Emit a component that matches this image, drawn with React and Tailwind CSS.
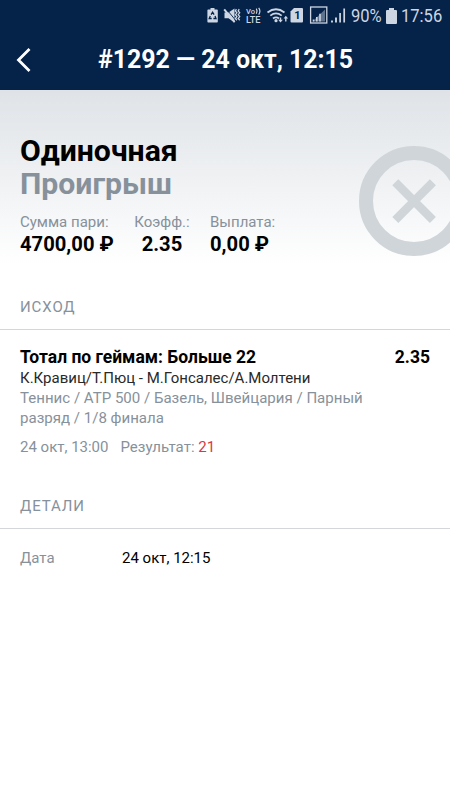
import React from "react";

const stats = [
  { label: "Сумма пари:", value: "4700,00 ₽", align: "w-[94px]" },
  { label: "Коэфф.:", value: "2.35", align: "w-14 text-center" },
  { label: "Выплата:", value: "0,00 ₽", align: "w-[66px]" },
];

// Battery saver, mute, VoLTE, wifi, SIM and signal icons
const StatusIcons = () => (
  <svg width="142" height="32" viewBox="0 0 142 32" fill="none" className="text-[#cdd6e2]">
    {/* battery with recycle sign */}
    <path d="M3.5 8h4v1.5H10a.8.8 0 0 1 .8.8v11.4a.8.8 0 0 1-.8.8H1.2a.8.8 0 0 1-.8-.8V10.3a.8.8 0 0 1 .8-.8h2.3z" fill="currentColor" />
    <path d="M4.1 14.6 5.6 12.2 7.1 14.6M8 16l1 2.5H6.4M4.7 18.5H2.2L3.3 16" stroke="#052248" strokeWidth="1.3" />

    {/* muted speaker with vibration */}
    <path d="M17.5 12.5h4L27.5 8.5v14l-6-4.2h-4z" fill="currentColor" />
    <path d="m19.2 8.8 10 12.2" stroke="#052248" strokeWidth=".9" />
    <path d="m17.2 9.4 10.4 12.8" stroke="currentColor" strokeWidth="2" />
    <path d="m29.4 9.2-1 1.7 1.5 1.9-1.5 1.9 1.5 1.9-1.5 1.9 1.5 1.7M32.2 9.2l-1 1.7 1.5 1.9-1.5 1.9 1.5 1.9-1.5 1.9 1.5 1.7" stroke="currentColor" strokeWidth="1.3" />

    <text x="39" y="14" fontSize="7.5" fontWeight="500" textLength="9" lengthAdjust="spacingAndGlyphs" fill="currentColor">Vo</text>
    <path d="M49.3 8.6q1.600 2.600 0 5.200M51.700 7.800q2.400 3.400 0 6.800" stroke="currentColor" strokeWidth="1.2" />
    <text x="39" y="23" fontSize="9" fontWeight="500" textLength="14.5" lengthAdjust="spacingAndGlyphs" fill="currentColor">LTE</text>

    {/* wifi with traffic arrows */}
    <path d="M60.5 12.5q8.5-6.5 17 0M63.3 15.6q5.7-4.4 11.4 0M66 18.5q3-2.3 6 0" stroke="currentColor" strokeWidth="1.8" />
    <circle cx="69" cy="20.7" r="1.6" fill="currentColor" />
    <path d="M72.8 17.5h1.4v2.2h1.7L73.5 22.5l-2.3-2.8h1.6zM79.500 21.500h-1.400V18.500h-1.500l2.200-2.800 2.300 2.800h-1.600z" fill="currentColor" />

    <path d="m87 8-3.5 3.5v10q0 1 1 1H95q1 0 1-1V9q0-1-1-1z" fill="currentColor" />
    <text x="87.3" y="19.3" fontSize="11" fontWeight="700" fill="#052248">1</text>

    {/* boxed signal */}
    <rect x="103.6" y="7" width="16.2" height="16" stroke="currentColor" strokeWidth="1.3" />
    <path d="M105.5 21.5 118 9.5v12z" fill="currentColor" opacity=".45" />
    <path d="M106.5 21.5v-2M109.800 21.5v-4.500M113 21.5v-7.700" stroke="currentColor" strokeWidth="1.6" />

    {/* second SIM signal */}
    <path d="M125 22.5v-2M129 22.5v-5" stroke="currentColor" strokeWidth="1.9" />
    <path d="M133.1 22.5v-9.5M137.2 22.5V8.5" stroke="currentColor" strokeWidth="1.7" />
  </svg>
);

const StatusBar = () => (
  <div className="flex h-8 items-center pl-[207px] text-[#cdd6e2]">
    <StatusIcons />
    <span className="ml-[2px] w-[32px] shrink-0 text-lg whitespace-nowrap">
      <span className="inline-block origin-left scale-x-[.92]">90%</span>
    </span>
    <svg width="11" height="16" viewBox="0 0 11 16" className="ml-[3px] shrink-0" fill="currentColor">
      <path d="M3 0h5v2h2q1 0 1 1v12q0 1-1 1H1q-1 0-1-1V3q0-1 1-1h2z" />
    </svg>
    <span className="ml-1 text-lg whitespace-nowrap">
      <span className="inline-block origin-left scale-x-[.92]">17:56</span>
    </span>
  </div>
);

const SectionTitle = ({ children }) => (
  <h2 className="h-[34px] border-b border-[#d3d7dc] px-5 text-[15px] leading-[22px] tracking-[.9px] text-[#87919b]">
    {children}
  </h2>
);

const App = () => {
  return (
    <div className="h-[800px] w-[450px] overflow-hidden bg-white font-['Roboto','Noto_Sans',sans-serif] text-black">
      <header className="h-[90px] bg-[#052248] text-white">
        <StatusBar />
        <div className="flex h-14 items-center">
          <svg width="20" height="28" viewBox="0 0 20 28" fill="none" className="ml-[14px]">
            <path d="M15.5 3 4.5 14 15.5 25" stroke="white" strokeWidth="2.8" />
          </svg>
          <h1 className="ml-16 text-[24.9px] font-bold whitespace-nowrap">#1292 — 24 окт, 12:15</h1>
        </div>
      </header>

      <section className="flex h-[206px] justify-between bg-linear-to-b from-[#dfe3e7] from-0% to-white to-85%">
        <div className="shrink-0 pt-11 pl-5">
          <p className="text-[30.2px] leading-[33px] font-bold">Одиночная</p>
          <p className="text-[30.2px] leading-[33px] font-bold text-[#87919b]">Проигрыш</p>
          <div className="mt-[11px] flex gap-5">
            {stats.map((s) => (
              <div key={s.label} className={`whitespace-nowrap ${s.align}`}>
                <p className="text-[15px] leading-[22px] text-[#87919b]">{s.label}</p>
                <p className="text-[20.2px] leading-[22px] font-bold">{s.value}</p>
              </div>
            ))}
          </div>
        </div>
        <svg width="91" height="110" viewBox="0 0 91 110" fill="none" className="mt-14 shrink-0">
          <circle cx="55" cy="55" r="48" stroke="#d0d5d9" strokeWidth="14" />
          <path d="m36.3 36.3 37.6 37.6M73.9 36.3 36.3 73.9" stroke="#d0d5d9" strokeWidth="8.5" />
        </svg>
      </section>

      <SectionTitle>ИСХОД</SectionTitle>
      <section className="px-5 pt-4 text-[15px] leading-5 text-[#87919b]">
        <div className="flex justify-between text-[17.5px] leading-[22px] font-bold text-black">
          <h3>Тотал по геймам: Больше 22</h3>
          <span>2.35</span>
        </div>
        <p className="text-[#292929]">К.Кравиц/Т.Пюц - М.Гонсалес/А.Молтени</p>
        <p className="w-[370px] text-[15.05px]">Теннис / ATP 500 / Базель, Швейцария / Парный разряд / 1/8 финала</p>
        <div className="mt-[9px] flex gap-3">
          <span>24 окт, 13:00</span>
          <span>
            Результат: <span className="text-[#d83a43]">21</span>
          </span>
        </div>
      </section>

      <div className="mt-[38px]">
        <SectionTitle>ДЕТАЛИ</SectionTitle>
        <dl className="flex px-5 pt-[18px] text-[15px] leading-[22px]">
          <dt className="w-[102px] text-[#87919b]">Дата</dt>
          <dd>24 окт, 12:15</dd>
        </dl>
      </div>
    </div>
  );
};

export default App;
